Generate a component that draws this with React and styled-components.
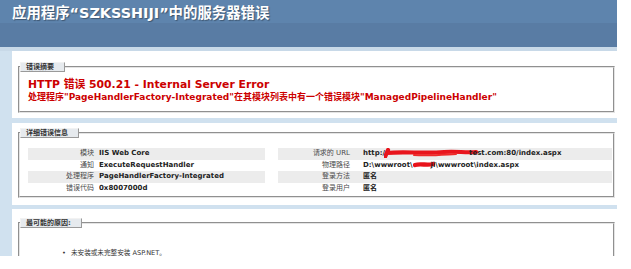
import React from 'react';
import styled, { createGlobalStyle } from 'styled-components';

const GlobalStyle = createGlobalStyle`
  html, body {
    margin: 0;
    padding: 0;
    background: #fff;
  }
  body {
    font-family: "DejaVu Sans", "Noto Sans CJK SC", sans-serif;
  }
`;

const Page = styled.div`
  width: 617px;
  height: 256px;
  overflow: hidden;
  background: #d0e1ef;
`;

const Header = styled.div`
  height: 23px;
  padding-left: 12px;
  display: flex;
  align-items: center;
  background: #5e84ad;
`;

const Title = styled.h1`
  margin: 0;
  font-size: 14.4px;
  font-weight: bold;
  color: #fff;
  white-space: nowrap;
  text-shadow: 1px 1px 1px rgba(0, 0, 0, 0.35);
`;

const ServerBar = styled.div`
  height: 24px;
  background: #597ca4;
  border-bottom: 4px solid #c8d9e8;
`;

const Content = styled.div`
  padding-left: 12px;
  display: flex;
  flex-direction: column;
`;

const Container = styled.div`
  background: #fff;
  margin-top: ${p => p.$gap}px;
  padding: ${p => p.$top}px 2px ${p => p.$bottom}px 6px;
`;

const Fieldset = styled.fieldset`
  margin: 0;
  padding: 0 1px ${p => p.$bottom}px 8px;
  border: 2px groove #e4e4e4;
  min-width: 0;
`;

const Legend = styled.legend`
  margin-left: -8px;
  padding: 1px 10px 0 5px;
  height: 7px;
  line-height: 7px;
  font-size: 7px;
  font-weight: bold;
  color: #333;
  background: #e6eaee;
  border-top: 1px solid #f2f2f2;
  border-left: 1px solid #f2f2f2;
  border-right: 1px solid #9a9a9a;
  border-bottom: 1px solid #9a9a9a;
  white-space: nowrap;
`;

const ErrorTitle = styled.h2`
  margin: 6px 0 0 0;
  font-size: 10.8px;
  line-height: 13px;
  color: #cc0000;
  white-space: nowrap;
`;

const ErrorDesc = styled.h3`
  margin: 1px 0 0 0;
  font-size: 9px;
  line-height: 11px;
  color: #cc0000;
  white-space: nowrap;
`;

const Details = styled.div`
  margin-top: 10px;
  display: grid;
  grid-template-columns: 237px 1fr;
  column-gap: 13px;
`;

const InfoTable = styled.div`
  display: grid;
  grid-template-columns: ${p => p.$label}px 1fr;
`;

const Cell = styled.div`
  height: 11.5px;
  line-height: 11.5px;
  white-space: nowrap;
  overflow: hidden;
  background: ${p => (p.$alt ? '#ececec' : 'transparent')};
`;

const Label = styled(Cell)`
  text-align: right;
  padding-right: ${p => p.$gap}px;
  font-size: 7px;
  color: #4a4a4a;
`;

const Value = styled(Cell)`
  font-size: 7px;
  font-weight: bold;
  color: #222;
`;

const Redact = styled.svg`
  display: inline-block;
  vertical-align: middle;
  margin: 0 ${p => p.$after}px 0 ${p => p.$before}px;
`;

const CauseList = styled.ul`
  margin: 21px 0 0 0;
  padding-left: 34px;
  list-style: none;
`;

const Cause = styled.li`
  font-size: 6.6px;
  line-height: 9px;
  color: #333;
  white-space: nowrap;

  &::before {
    content: '•';
    display: inline-block;
    width: 9px;
  }
`;

const leftRows = [
  ['模块', 'IIS Web Core'],
  ['通知', 'ExecuteRequestHandler'],
  ['处理程序', 'PageHandlerFactory-Integrated'],
  ['错误代码', '0x8007000d'],
];

const UrlMark = () => (
  <Redact width="94" height="10" viewBox="0 0 94 10" $before={-1} $after={-9}>
    <path d="M1 9 L4 2 M3 5 C20 3 40 6 60 4 C72 3 82 5 92 4" stroke="#e8141c" strokeWidth="4.2" fill="none" strokeLinecap="round" />
    <path d="M30 7 C45 8 55 7 72 6" stroke="#ee2a2a" strokeWidth="2" fill="none" strokeLinecap="round" />
  </Redact>
);

const PathMark = () => (
  <Redact width="22" height="9" viewBox="0 0 22 9" $before={0} $after={-4}>
    <path d="M2 5 C8 3 14 6 20 4" stroke="#e8141c" strokeWidth="4.4" fill="none" strokeLinecap="round" />
  </Redact>
);

const rightRows = [
  ['请求的 URL', <>http:/<UrlMark />test.com:80/index.aspx</>],
  ['物理路径', <>D:\wwwroot\<PathMark />ji\wwwroot\index.aspx</>],
  ['登录方法', '匿名'],
  ['登录用户', '匿名'],
];

const Table = ({ rows, label, gap }) => (
  <InfoTable $label={label}>
    {rows.map(([name, value], i) => (
      <React.Fragment key={name}>
        <Label $alt={i % 2 === 0} $gap={gap}>{name}</Label>
        <Value $alt={i % 2 === 0}>{value}</Value>
      </React.Fragment>
    ))}
  </InfoTable>
);

export default function App() {
  return (
    <>
      <GlobalStyle />
      <Page>
        <Header>
          <Title>应用程序“SZKSSHIJI”中的服务器错误</Title>
        </Header>
        <ServerBar />
        <Content>
          <Container $gap={0} $top={11} $bottom={5}>
            <Fieldset $bottom={8}>
              <Legend>错误摘要</Legend>
              <ErrorTitle>HTTP 错误 500.21 - Internal Server Error</ErrorTitle>
              <ErrorDesc>处理程序"PageHandlerFactory-Integrated"在其模块列表中有一个错误模块"ManagedPipelineHandler"</ErrorDesc>
            </Fieldset>
          </Container>
          <Container $gap={5} $top={5} $bottom={7}>
            <Fieldset $bottom={2}>
              <Legend>详细错误信息</Legend>
              <Details>
                <Table rows={leftRows} label={71} gap={5} />
                <Table rows={rightRows} label={85} gap={13} />
              </Details>
            </Fieldset>
          </Container>
          <Container $gap={4} $top={9} $bottom={4}>
            <Fieldset $bottom={4}>
              <Legend>最可能的原因:</Legend>
              <CauseList>
                <Cause>未安装或未完整安装 ASP.NET。</Cause>
              </CauseList>
            </Fieldset>
          </Container>
        </Content>
      </Page>
    </>
  );
}
